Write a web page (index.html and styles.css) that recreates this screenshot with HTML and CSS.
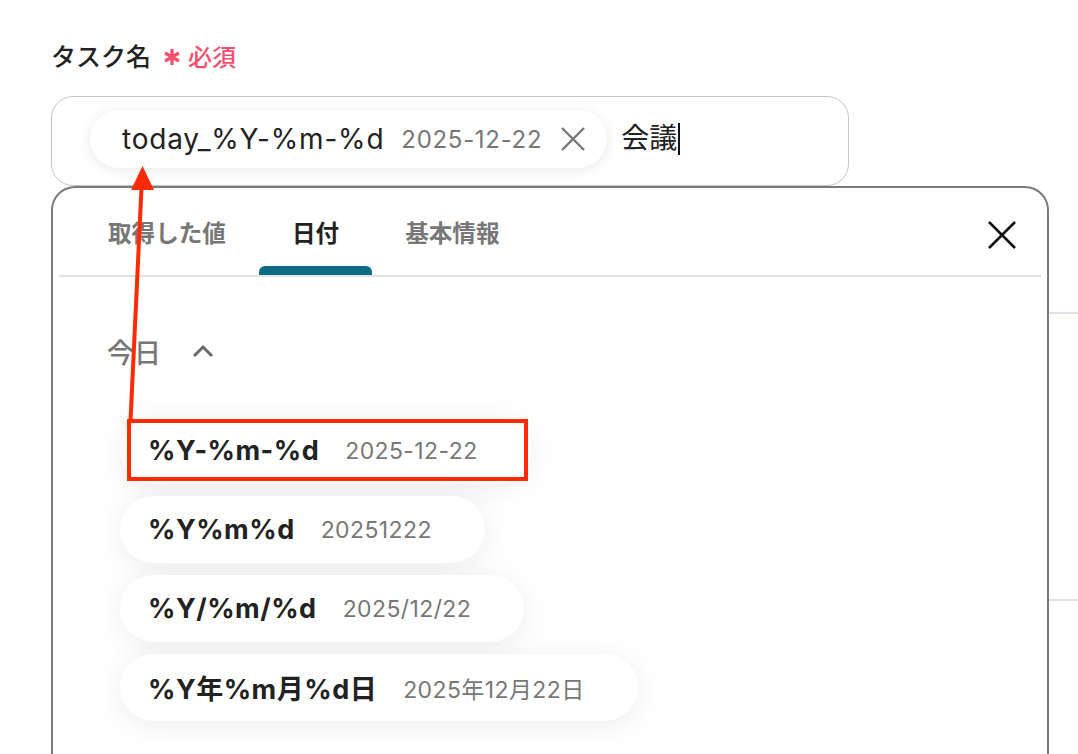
FILE: index.html
```html
<!DOCTYPE html>
<html lang="ja">
<head>
<meta charset="utf-8">
<link rel="stylesheet" href="styles.css">
</head>
<body>
<div class="backdrop">
  <div class="bg-line bg-line-1"></div>
  <div class="bg-line bg-line-2"></div>
</div>
<main class="page">
  <div class="label">
    <span class="label-text">タスク名</span>
    <svg class="req-star" width="20" height="20" viewBox="0 0 20 20"><path d="M10 2 V18 M3.1 6 L16.9 14 M16.9 6 L3.1 14" stroke="#f5506b" stroke-width="3.2" fill="none"/></svg>
    <span class="req-text">必須</span>
  </div>
  <div class="field">
    <div class="chip">
      <span class="chip-key">today_%Y-%m-%d</span>
      <span class="chip-val">2025-12-22</span>
      <svg class="chip-x" width="26" height="26" viewBox="0 0 26 26"><path d="M2 2 L24 24 M24 2 L2 24" stroke="#777" stroke-width="2.4" fill="none"/></svg>
    </div>
    <span class="field-text">会議</span><span class="caret"></span>
  </div>
  <section class="panel">
    <div class="tabbar">
      <div class="tab">取得した値</div>
      <div class="tab active">日付</div>
      <div class="tab">基本情報</div>
      <svg class="close" width="30" height="30" viewBox="0 0 30 30"><path d="M2 2 L28 28 M28 2 L2 28" stroke="#111" stroke-width="2.6" fill="none"/></svg>
    </div>
    <div class="section-head">
      <span class="section-title">今日</span>
      <svg class="chev" width="22" height="14" viewBox="0 0 22 14"><path d="M2 12 L11 3 L20 12" stroke="#6b6b6b" stroke-width="3" fill="none"/></svg>
    </div>
    <div class="items">
      <div class="pill"><span class="pill-key">%Y-%m-%d</span><span class="pill-val">2025-12-22</span></div>
      <div class="pill"><span class="pill-key">%Y%m%d</span><span class="pill-val">20251222</span></div>
      <div class="pill"><span class="pill-key">%Y/%m/%d</span><span class="pill-val">2025/12/22</span></div>
      <div class="pill"><span class="pill-key">%Y年%m月%d日</span><span class="pill-val">2025年12月22日</span></div>
    </div>
  </section>
</main>
<div class="highlight-box"></div>
<svg class="arrow" width="1078" height="754" viewBox="0 0 1078 754">
  <path d="M130.5 421 L141.5 188" stroke="#ff2a00" stroke-width="4" fill="none"/>
  <path d="M142.5 166 L131 190 L154 190 Z" fill="#ff2a00"/>
</svg>
</body>
</html>
```

FILE: styles.css
```css
* { box-sizing: border-box; }
html, body { margin: 0; padding: 0; }
body {
  width: 1078px;
  height: 754px;
  overflow: hidden;
  background: #fff;
  font-family: Inter, "Noto Sans CJK JP", sans-serif;
  color: #222;
  position: relative;
}
.backdrop { position: absolute; inset: 0; z-index: 0; }
.bg-line { position: absolute; left: 1040px; width: 40px; height: 2px; background: #e0e1e6; }
.bg-line-1 { top: 312px; }
.bg-line-2 { top: 599px; }

.page {
  position: relative;
  z-index: 1;
  padding: 38px 0 0 51px;
}
.label {
  display: flex;
  align-items: center;
  height: 34px;
  margin-bottom: 24px;
}
.label-text {
  font-family: "Noto Sans CJK JP", sans-serif;
  font-size: 25px;
  font-weight: 500;
  color: #222;
}
.req-star {
  margin: 4px 6px 0 11px;
}
.req-text {
  font-family: "Noto Sans CJK JP", sans-serif;
  color: #f5506b;
  font-size: 24px;
  font-weight: 500;
}
.field {
  width: 798px;
  height: 90px;
  border: 1.5px solid #c6c6c6;
  border-radius: 22px;
  display: flex;
  align-items: center;
  padding-left: 38px;
  padding-bottom: 4px;
  background: #fff;
}
.chip {
  display: flex;
  align-items: center;
  height: 58px;
  border-radius: 29px;
  padding: 0 21px 0 32px;
  background: #fff;
  box-shadow: 0 2px 14px rgba(0,0,0,0.09);
}
.chip-key {
  font-size: 28px;
  color: #222;
  letter-spacing: 0.8px;
}
.chip-val {
  font-size: 24px;
  color: #777;
  margin-left: 17px;
  letter-spacing: 0.7px;
}
.chip-x { margin-left: 18px; }
.field-text {
  font-family: "Noto Sans CJK JP", sans-serif;
  font-size: 28px;
  margin-left: 14px;
  color: #222;
  padding-bottom: 6px;
}
.caret {
  display: inline-block;
  width: 2px;
  height: 32px;
  background: #111;
  margin-left: 1px;
}

.panel {
  width: 998px;
  height: 600px;
  border: 2px solid #7a7a7a;
  border-bottom: none;
  border-radius: 24px 24px 0 0;
  background: #fff;
  padding: 0 6px;
}
.tabbar {
  display: flex;
  align-items: stretch;
  height: 89px;
  border-bottom: 2px solid #e3e3e3;
  padding-left: 16px;
  position: relative;
}
.tab {
  font-family: "Noto Sans CJK JP", sans-serif;
  font-size: 23.6px;
  font-weight: 700;
  color: #777;
  padding: 0 33px;
  display: flex;
  align-items: center;
  position: relative;
}
.tab.active { color: #222; }
.tab.active::after {
  content: "";
  position: absolute;
  left: 0; right: 0; bottom: 0;
  height: 9px;
  background: #0d6b85;
  border-radius: 6px 6px 0 0;
}
.close { margin-left: auto; margin-right: 24px; align-self: center; margin-top: 6px; }

.section-head {
  display: flex;
  align-items: center;
  padding-left: 48px;
  margin-top: 57px;
  height: 34px;
}
.section-title {
  font-family: "Noto Sans CJK JP", sans-serif;
  font-size: 27px;
  font-weight: 500;
  color: #777;
}
.chev { margin-left: 31px; }

.items {
  display: flex;
  flex-direction: column;
  align-items: flex-start;
  gap: 12px;
  padding-left: 61px;
  margin-top: 49px;
}
.pill {
  display: flex;
  align-items: center;
  height: 67px;
  border-radius: 34px;
  padding: 0 53px 0 28px;
  background: #fff;
  box-shadow: 0 4px 30px rgba(0,0,0,0.08);
}
.pill-key {
  font-size: 27px;
  font-weight: 700;
  color: #222;
  letter-spacing: 0.5px;
}
.pill-val {
  font-size: 23px;
  color: #777;
  margin-left: 26px;
  letter-spacing: 0.4px;
}

.highlight-box {
  position: absolute;
  z-index: 2;
  left: 127px;
  top: 419px;
  width: 401px;
  height: 62px;
  border: 4px solid #ff2a00;
}
.arrow {
  position: absolute;
  z-index: 3;
  left: 0;
  top: 0;
  pointer-events: none;
}
```
